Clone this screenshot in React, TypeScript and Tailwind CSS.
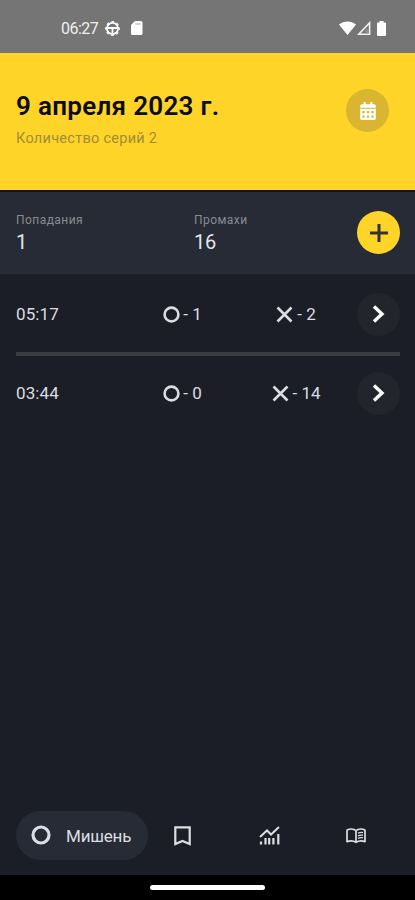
import { FaCalendarAlt } from 'react-icons/fa';

type Series = {
  time: string;
  hits: number;
  misses: number;
};

const seriesList: Series[] = [
  { time: '05:17', hits: 1, misses: 2 },
  { time: '03:44', hits: 0, misses: 14 },
];

function StatusBar() {
  return (
    <div className="h-[53px] shrink-0 bg-[#757575] flex items-center justify-between pl-[61px] pr-[29px] pt-[3px] text-white">
      <div className="flex items-center">
        <span className="w-[38px] pt-px text-[16px] tracking-[-0.5px] whitespace-nowrap text-[#f0f0f0]">06:27</span>
        <svg className="ml-[6px]" width="15" height="15" viewBox="0 0 15 15" fill="none" stroke="currentColor">
          <circle cx="7.5" cy="7.5" r="5.6" strokeWidth="1.7" />
          <circle cx="7.5" cy="7.5" r="6.8" strokeWidth="1.2" strokeDasharray="2.67 2.67" strokeDashoffset="1.33" />
          <path d="M3 7h9M7.5 7v5" strokeWidth="1.8" />
        </svg>
        <svg className="ml-[11px]" width="12" height="14" viewBox="0 0 12 14">
          <path d="M4 0H10a1.5 1.5 0 0 1 1.5 1.5v11A1.5 1.5 0 0 1 10 14H1.5A1.5 1.5 0 0 1 0 12.5V4z" fill="currentColor" />
          <path d="M4.500 3h5" stroke="#a8a8a8" strokeWidth="1" />
        </svg>
      </div>
      <div className="flex items-center">
        <svg width="17" height="14" viewBox="0 0 17 14">
          <path d="M0 3.500C5 -.500 12 -.500 17 3.500L8.500 14z" fill="currentColor" />
        </svg>
        <svg className="ml-px" width="14" height="14" viewBox="0 0 14 14">
          <path d="M12.600 1.800V13.200H1.800z" fill="none" stroke="#f2f2f2" strokeWidth="1.600" />
          <path d="M8.500 8.500h3v4h-3z" fill="#929292" />
        </svg>
        <svg className="ml-[6px]" width="9" height="15" viewBox="0 0 9 15">
          <path d="M2.500 0h4v1.500H8A1 1 0 0 1 9 2.500V14a1 1 0 0 1-1 1H1a1 1 0 0 1-1-1V2.500a1 1 0 0 1 1-1h1.500z" fill="currentColor" />
        </svg>
      </div>
    </div>
  );
}

function SeriesRow({ time, hits, misses }: Series) {
  return (
    <div className="h-[43px] flex items-center text-[17px] text-[#dcdde0]">
      <span className="w-[117px] pt-px tracking-[0.1px]">{time}</span>
      <div className="w-[103px] flex items-center justify-center">
        <svg className="ml-[2px] mb-px" width="17" height="17" viewBox="0 0 17 17" fill="none" stroke="currentColor">
          <circle cx="8.5" cy="8.500" r="6.900" strokeWidth="2.600" />
        </svg>
        <span className="ml-[3px] pt-px whitespace-pre">- {hits}</span>
      </div>
      <div className="w-[127px] flex items-center justify-center">
        <svg className="ml-[3px] mb-px" width="17" height="17" viewBox="0 0 17 17" fill="none" stroke="currentColor">
          <path d="M1.500 1.500l14 14M15.500 1.500L1.500 15.500" strokeWidth="2.600" />
        </svg>
        <span className="ml-[4px] pt-px whitespace-pre">- {misses}</span>
      </div>
      <button className="ml-auto size-[43px] shrink-0 rounded-full bg-[#22262c] flex items-center justify-center text-white">
        <svg className="mb-px" width="13" height="18" viewBox="0 0 13 18" fill="none" stroke="currentColor">
          <path d="M2 1.500L10 9L2 16.500" strokeWidth="3.400" />
        </svg>
      </button>
    </div>
  );
}

export default function App() {
  return (
    <div className="w-[415px] h-[900px] flex flex-col overflow-hidden bg-[#1b1e26] font-['Roboto',sans-serif]">
      <StatusBar />

      {/* Header */}
      <header className="h-[137px] shrink-0 bg-[#ffd429] flex justify-between pl-4 pr-[26px] pt-[36px]">
        <div>
          <h1 className="text-[26px] leading-[34px] font-semibold tracking-[0.3px] text-[#0c0c0c] whitespace-nowrap">9 апреля 2023 г.</h1>
          <p className="mt-[6px] text-[14.5px] leading-[20px] tracking-[0.28px] text-[#a18c38]">Количество серий 2</p>
        </div>
        <button className="size-[43px] rounded-full bg-[#d9b531] flex items-center justify-center text-white">
          <FaCalendarAlt className="w-[16px] h-[18px] mt-px" />
        </button>
      </header>

      {/* Totals */}
      <section className="h-[84px] shrink-0 border-t-2 border-[#11141f] bg-[#262b35] flex items-center pl-4 pr-[15px]">
        <div className="w-[178px]">
          <p className="text-[12px] leading-[16px] tracking-[0.45px] text-[#888b91]">Попадания</p>
          <p className="mt-[2px] mb-px text-[20px] leading-[24px] tracking-[-0.3px] text-[#e4e5e8]">1</p>
        </div>
        <div>
          <p className="text-[12px] leading-[16px] tracking-[0.45px] text-[#888b91]">Промахи</p>
          <p className="mt-[2px] mb-px text-[20px] leading-[24px] tracking-[-0.3px] text-[#e4e5e8]">16</p>
        </div>
        <button className="ml-auto mb-px size-[43px] rounded-full bg-[#ffd429] flex items-center justify-center text-[#33342d]">
          <svg width="18" height="18" viewBox="0 0 18 18" stroke="currentColor">
            <path d="M9 0v18M0 9h18" strokeWidth="3" />
          </svg>
        </button>
      </section>

      {/* Series list */}
      <main className="flex-1 pl-4 pr-[15px] pt-[19px]">
        <SeriesRow {...seriesList[0]} />
        <div className="my-[16px] h-[4px] bg-[#3c3e43]" />
        <SeriesRow {...seriesList[1]} />
      </main>

      {/* Bottom tabs */}
      <nav className="h-[64px] shrink-0 px-4 flex items-start text-[#dddee1]">
        <div className="w-[132px] h-[49px] rounded-full bg-[#262b35] flex items-center pl-[15px]">
          <svg className="mb-px" width="20" height="20" viewBox="0 0 20 20" fill="none" stroke="currentColor">
            <circle cx="10" cy="10" r="8" strokeWidth="3.2" />
          </svg>
          <span className="ml-[15px] pt-[2px] text-[17px] tracking-[-0.2px]">Мишень</span>
        </div>
        <div className="h-[49px] flex items-center">
          <svg className="ml-[26px]" width="17" height="20" viewBox="0 0 17 20" fill="none" stroke="currentColor">
            <path d="M1.300 1.300h14.400v16.700L8.500 14.900L1.300 18z" strokeWidth="2.200" />
          </svg>
          <svg className="ml-[68px]" width="22" height="19" viewBox="0 0 22 19" fill="none" stroke="currentColor">
            <path d="M1 11L8 4.500L12 8.500L20 1" strokeWidth="2" />
            <path d="M2 15.500V18.500M6.500 12V18.500M10.200 12V18.500M14.400 12V18.500M19.300 8V18.500" strokeWidth="2.200" />
          </svg>
          <svg className="ml-[65px]" width="20" height="16" viewBox="0 0 20 16" fill="none" stroke="currentColor">
            <path d="M10 2.600C7.500.600 3.500.500 1 2.200V13.600C4 12.600 7.500 12.700 10 14.300C12.500 12.700 16 12.600 19 13.600V2.200C16.500.500 12.500.600 10 2.600zV14.300" strokeWidth="1.700" strokeLinejoin="round" />
            <path d="M12 5.200q2.500-1.100 5-.600M12 7.800q2.500-1.100 5-.600M12 10.400q2.500-1.100 5-.600" strokeWidth="1.300" />
          </svg>
        </div>
      </nav>

      {/* Gesture bar */}
      <div className="h-[25px] shrink-0 bg-black flex justify-center pt-[10px]">
        <div className="w-[115px] h-[5px] rounded-full bg-white" />
      </div>
    </div>
  );
}
